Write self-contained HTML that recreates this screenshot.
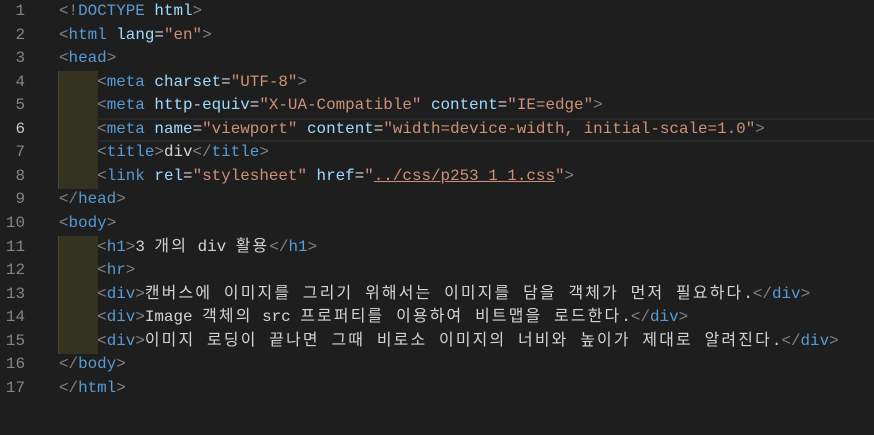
<!DOCTYPE html>
<html><head><meta charset="utf-8"><style>
body{margin:0;background:#1e1e1e;width:874px;height:435px;overflow:hidden;font-family:"Liberation Mono","Noto Sans CJK KR",monospace;font-size:15.9px;}
.l{position:absolute;left:0;height:23.56px;line-height:23.56px;white-space:pre;width:874px}
.n{position:absolute;left:0;width:25px;text-align:right;color:#858585}
.c{position:absolute;left:59px;color:#d4d4d4}
.g{position:absolute;left:58px;width:39px;background:#33331f;border-left:1px solid #4a4a3a}
.cur{position:absolute;left:97px;width:777px;border-top:2px solid #282828;border-bottom:2px solid #282828;box-sizing:border-box}
.b{color:#808080}.t{color:#569cd6}.a{color:#9cdcfe}.s{color:#ce9178}.k{letter-spacing:2.2px}
.u{text-decoration:underline}
</style></head><body>
<div class="g" style="top:71px;height:118px"></div>
<div class="g" style="top:236px;height:118px"></div>
<div class="cur" style="top:118px;height:24px"></div>
<div class="l" style="top:0"><span class="n">1</span><span class="c"><span class="b">&lt;!</span><span class="t">DOCTYPE</span> <span class="a">html</span><span class="b">&gt;</span></span></div>
<div class="l" style="top:23.56px"><span class="n">2</span><span class="c"><span class="b">&lt;</span><span class="t">html</span> <span class="a">lang</span>=<span class="s">"en"</span><span class="b">&gt;</span></span></div>
<div class="l" style="top:47.12px"><span class="n">3</span><span class="c"><span class="b">&lt;</span><span class="t">head</span><span class="b">&gt;</span></span></div>
<div class="l" style="top:70.68px"><span class="n">4</span><span class="c">    <span class="b">&lt;</span><span class="t">meta</span> <span class="a">charset</span>=<span class="s">"UTF-8"</span><span class="b">&gt;</span></span></div>
<div class="l" style="top:94.24px"><span class="n">5</span><span class="c">    <span class="b">&lt;</span><span class="t">meta</span> <span class="a">http-equiv</span>=<span class="s">"X-UA-Compatible"</span> <span class="a">content</span>=<span class="s">"IE=edge"</span><span class="b">&gt;</span></span></div>
<div class="l" style="top:117.8px"><span class="n" style="color:#c6c6c6">6</span><span class="c">    <span class="b">&lt;</span><span class="t">meta</span> <span class="a">name</span>=<span class="s">"viewport"</span> <span class="a">content</span>=<span class="s">"width=device-width, initial-scale=1.0"</span><span class="b">&gt;</span></span></div>
<div class="l" style="top:141.36px"><span class="n">7</span><span class="c">    <span class="b">&lt;</span><span class="t">title</span><span class="b">&gt;</span>div<span class="b">&lt;/</span><span class="t">title</span><span class="b">&gt;</span></span></div>
<div class="l" style="top:164.92px"><span class="n">8</span><span class="c">    <span class="b">&lt;</span><span class="t">link</span> <span class="a">rel</span>=<span class="s">"stylesheet"</span> <span class="a">href</span>=<span class="s">"<span class="u">../css/p253_1_1.css</span>"</span><span class="b">&gt;</span></span></div>
<div class="l" style="top:188.48px"><span class="n">9</span><span class="c"><span class="b">&lt;/</span><span class="t">head</span><span class="b">&gt;</span></span></div>
<div class="l" style="top:212.04px"><span class="n">10</span><span class="c"><span class="b">&lt;</span><span class="t">body</span><span class="b">&gt;</span></span></div>
<div class="l" style="top:235.6px"><span class="n">11</span><span class="c">    <span class="b">&lt;</span><span class="t">h1</span><span class="b">&gt;</span>3 <span class="k">개의</span> div <span class="k">활용</span><span class="b">&lt;/</span><span class="t">h1</span><span class="b">&gt;</span></span></div>
<div class="l" style="top:259.16px"><span class="n">12</span><span class="c">    <span class="b">&lt;</span><span class="t">hr</span><span class="b">&gt;</span></span></div>
<div class="l" style="top:282.72px"><span class="n">13</span><span class="c">    <span class="b">&lt;</span><span class="t">div</span><span class="b">&gt;</span><span class="k">캔버스에 이미지를 그리기 위해서는 이미지를 담을 객체가 먼저 필요하다</span>.<span class="b">&lt;/</span><span class="t">div</span><span class="b">&gt;</span></span></div>
<div class="l" style="top:306.28px"><span class="n">14</span><span class="c">    <span class="b">&lt;</span><span class="t">div</span><span class="b">&gt;</span>Image <span class="k">객체의</span> src <span class="k">프로퍼티를 이용하여 비트맵을 로드한다</span>.<span class="b">&lt;/</span><span class="t">div</span><span class="b">&gt;</span></span></div>
<div class="l" style="top:329.84px"><span class="n">15</span><span class="c">    <span class="b">&lt;</span><span class="t">div</span><span class="b">&gt;</span><span class="k">이미지 로딩이 끝나면 그때 비로소 이미지의 너비와 높이가 제대로 알려진다</span>.<span class="b">&lt;/</span><span class="t">div</span><span class="b">&gt;</span></span></div>
<div class="l" style="top:353.4px"><span class="n">16</span><span class="c"><span class="b">&lt;/</span><span class="t">body</span><span class="b">&gt;</span></span></div>
<div class="l" style="top:376.96px"><span class="n">17</span><span class="c"><span class="b">&lt;/</span><span class="t">html</span><span class="b">&gt;</span></span></div>
</body></html>
